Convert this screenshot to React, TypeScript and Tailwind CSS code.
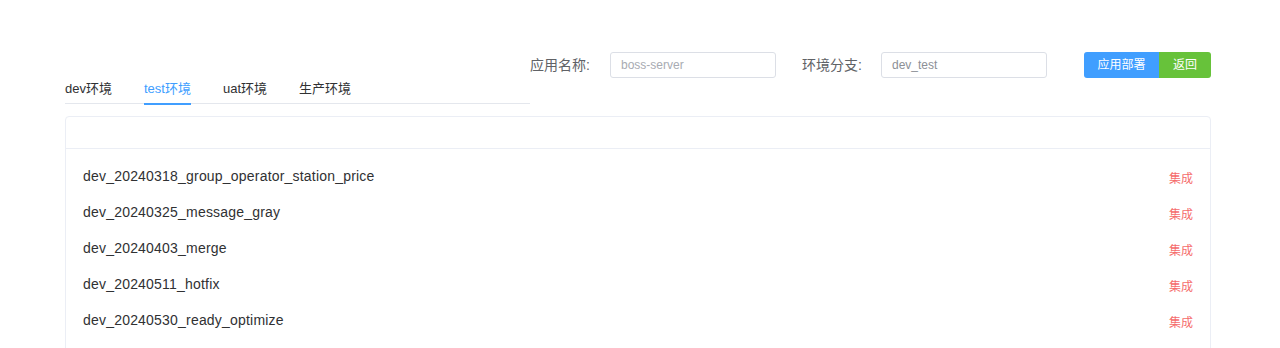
import { useState } from 'react'

const TABS = ['dev环境', 'test环境', 'uat环境', '生产环境']

const BRANCHES = [
  'dev_20240318_group_operator_station_price',
  'dev_20240325_message_gray',
  'dev_20240403_merge',
  'dev_20240511_hotfix',
  'dev_20240530_ready_optimize',
  'dev_20240612_release',
]

export default function App() {
  const [active, setActive] = useState(1)

  return (
    <div
      className="w-[1280px] h-[348px] overflow-hidden bg-white pl-[65px] pt-[52px] text-[13px] text-[#303133]"
      style={{ fontFamily: '"Liberation Sans", "Noto Sans CJK SC", sans-serif' }}
    >
      {/* Top: tabs + search form */}
      <div className="flex items-start w-[1146px]">
        <div className="w-[465px] mt-[12px] flex border-b border-[#e4e7ed] h-[40px]">
          {TABS.map((t, i) => (
            <div
              key={t}
              onClick={() => setActive(i)}
              className={`relative mr-[32px] h-[40px] pt-[9px] flex items-center cursor-pointer ${
                i === active ? 'text-[#409eff]' : 'text-[#303133]'
              }`}
            >
              {t}
              {i === active && (
                <div className="absolute left-0 right-0 bottom-[-1px] h-[2px] bg-[#409eff]" />
              )}
            </div>
          ))}
        </div>

        <div className="flex items-center h-[26px]">
          <span className="text-[#606266] text-[14px] w-[80px]">应用名称:</span>
          <div className="w-[166px] h-[26px] border border-[#dcdfe6] rounded-[3px] px-[10px] flex items-center text-[12px] text-[#a8abb2]">
            boss-server
          </div>
          <span className="text-[#606266] text-[14px] ml-[26px] w-[79px]">环境分支:</span>
          <div className="w-[166px] h-[26px] border border-[#dcdfe6] rounded-[3px] px-[10px] flex items-center text-[12px] text-[#8c8f96]">
            dev_test
          </div>
          <div className="ml-[37px] flex">
            <button className="w-[75px] h-[26px] bg-[#409eff] text-white text-[12px] rounded-l-[3px]">
              应用部署
            </button>
            <button className="w-[52px] h-[26px] bg-[#67c23a] text-white text-[12px] rounded-r-[3px]">
              返回
            </button>
          </div>
        </div>
      </div>

      {/* Branch card */}
      <div className="mt-[12px] w-[1146px] border border-[#ebeef5] rounded-[4px]">
        <div className="h-[32px] border-b border-[#ebeef5]" />
        <div className="px-[17px] pt-[9px]">
          {BRANCHES.map(b => (
            <div key={b} className="h-[36px] flex items-center justify-between">
              <span className="text-[14px] tracking-[0.2px] text-[#303133]">{b}</span>
              <span className="text-[12px] text-[#f56c6c] pt-[6px] cursor-pointer">集成</span>
            </div>
          ))}
        </div>
      </div>
    </div>
  )
}
